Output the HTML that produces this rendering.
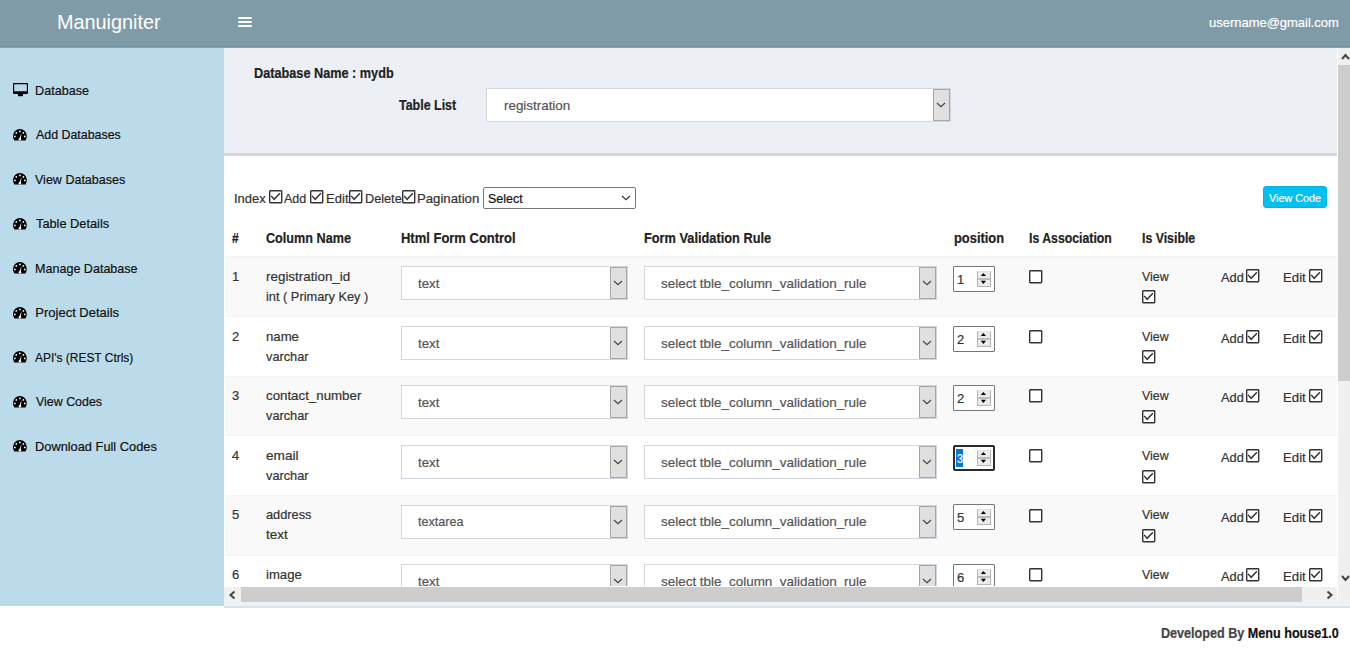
<!DOCTYPE html>
<html><head><meta charset="utf-8"><title>Manuigniter</title><style>
*{margin:0;padding:0;box-sizing:border-box}
html,body{width:1350px;height:650px;overflow:hidden}
body{position:relative;font-family:"Liberation Sans",sans-serif;background:#fff;color:#333}
.a{position:absolute}
.t{position:absolute;white-space:nowrap;line-height:1;transform-origin:0 0;-webkit-text-stroke:0.2px currentColor}
</style></head><body>
<div class="a" style="left:0px;top:0px;width:1350px;height:48px;background:#7f9ba8;"></div>
<div class="a" style="left:0px;top:46px;width:1350px;height:1px;background:#7391a0;"></div>
<div class="a" style="left:0px;top:47px;width:1350px;height:1px;background:#8aa3b0;"></div>
<div class="t" style="left:57.31px;top:12.37px;font-size:20px;color:#fff;transform:scaleX(0.9919);-webkit-text-stroke:0;">Manuigniter</div>
<div class="a" style="left:238px;top:17px;width:13.5px;height:2px;background:#fff;border-radius:1px;"></div>
<div class="a" style="left:238px;top:21px;width:13.5px;height:2px;background:#fff;border-radius:1px;"></div>
<div class="a" style="left:238px;top:25px;width:13.5px;height:2px;background:#fff;border-radius:1px;"></div>
<div class="t" style="left:1208.70px;top:15.57px;font-size:13.5px;color:#fff;transform:scaleX(0.9600);">username@gmail.com</div>
<div class="a" style="left:0px;top:48px;width:224px;height:558px;background:#bcdbea;"></div>
<div class="t" style="left:35.33px;top:83.80px;font-size:13px;color:#111;transform:scaleX(0.9721);">Database</div>
<svg class="a" style="left:13px;top:82.8px" width="15" height="14" viewBox="0 0 15 14"><path fill-rule="evenodd" d="M1,0 H14 Q15,0 15,1 V10 Q15,11 14,11 H1 Q0,11 0,10 V1 Q0,0 1,0 Z M1.2,1.2 V8.2 H13.8 V1.2 Z" fill="#000"/><rect x="5" y="11" width="5" height="2.2" fill="#000"/></svg>
<div class="t" style="left:35.70px;top:128.30px;font-size:13px;color:#111;transform:scaleX(0.9542);">Add Databases</div>
<svg class="a" style="left:13px;top:128.5px" width="14" height="12" viewBox="0 0 14 12"><path d="M1.3,11.5 Q0,9.5 0,7 A6.9,7 0 1 1 13.8,7 Q13.8,9.5 12.5,11.5 Z" fill="#000"/><circle cx="6.9" cy="2.4" r="0.9" fill="#fff"/><circle cx="3.3" cy="3.9" r="0.9" fill="#fff"/><circle cx="10.4" cy="3.9" r="0.9" fill="#fff"/><circle cx="1.9" cy="7.4" r="0.9" fill="#fff"/><circle cx="11.8" cy="7.4" r="0.9" fill="#fff"/><path d="M6.1,10.4 L8.5,4.1 L7.7,10.6 Z" fill="#fff"/><circle cx="6.9" cy="10.2" r="1.2" fill="#fff"/></svg>
<div class="t" style="left:35.30px;top:172.80px;font-size:13px;color:#111;transform:scaleX(0.9628);">View Databases</div>
<svg class="a" style="left:13px;top:173.0px" width="14" height="12" viewBox="0 0 14 12"><path d="M1.3,11.5 Q0,9.5 0,7 A6.9,7 0 1 1 13.8,7 Q13.8,9.5 12.5,11.5 Z" fill="#000"/><circle cx="6.9" cy="2.4" r="0.9" fill="#fff"/><circle cx="3.3" cy="3.9" r="0.9" fill="#fff"/><circle cx="10.4" cy="3.9" r="0.9" fill="#fff"/><circle cx="1.9" cy="7.4" r="0.9" fill="#fff"/><circle cx="11.8" cy="7.4" r="0.9" fill="#fff"/><path d="M6.1,10.4 L8.5,4.1 L7.7,10.6 Z" fill="#fff"/><circle cx="6.9" cy="10.2" r="1.2" fill="#fff"/></svg>
<div class="t" style="left:36.00px;top:217.30px;font-size:13px;color:#111;transform:scaleX(0.9823);">Table Details</div>
<svg class="a" style="left:13px;top:217.5px" width="14" height="12" viewBox="0 0 14 12"><path d="M1.3,11.5 Q0,9.5 0,7 A6.9,7 0 1 1 13.8,7 Q13.8,9.5 12.5,11.5 Z" fill="#000"/><circle cx="6.9" cy="2.4" r="0.9" fill="#fff"/><circle cx="3.3" cy="3.9" r="0.9" fill="#fff"/><circle cx="10.4" cy="3.9" r="0.9" fill="#fff"/><circle cx="1.9" cy="7.4" r="0.9" fill="#fff"/><circle cx="11.8" cy="7.4" r="0.9" fill="#fff"/><path d="M6.1,10.4 L8.5,4.1 L7.7,10.6 Z" fill="#fff"/><circle cx="6.9" cy="10.2" r="1.2" fill="#fff"/></svg>
<div class="t" style="left:35.33px;top:261.80px;font-size:13px;color:#111;transform:scaleX(0.9656);">Manage Database</div>
<svg class="a" style="left:13px;top:262.0px" width="14" height="12" viewBox="0 0 14 12"><path d="M1.3,11.5 Q0,9.5 0,7 A6.9,7 0 1 1 13.8,7 Q13.8,9.5 12.5,11.5 Z" fill="#000"/><circle cx="6.9" cy="2.4" r="0.9" fill="#fff"/><circle cx="3.3" cy="3.9" r="0.9" fill="#fff"/><circle cx="10.4" cy="3.9" r="0.9" fill="#fff"/><circle cx="1.9" cy="7.4" r="0.9" fill="#fff"/><circle cx="11.8" cy="7.4" r="0.9" fill="#fff"/><path d="M6.1,10.4 L8.5,4.1 L7.7,10.6 Z" fill="#fff"/><circle cx="6.9" cy="10.2" r="1.2" fill="#fff"/></svg>
<div class="t" style="left:35.30px;top:306.30px;font-size:13px;color:#111;">Project Details</div>
<svg class="a" style="left:13px;top:306.5px" width="14" height="12" viewBox="0 0 14 12"><path d="M1.3,11.5 Q0,9.5 0,7 A6.9,7 0 1 1 13.8,7 Q13.8,9.5 12.5,11.5 Z" fill="#000"/><circle cx="6.9" cy="2.4" r="0.9" fill="#fff"/><circle cx="3.3" cy="3.9" r="0.9" fill="#fff"/><circle cx="10.4" cy="3.9" r="0.9" fill="#fff"/><circle cx="1.9" cy="7.4" r="0.9" fill="#fff"/><circle cx="11.8" cy="7.4" r="0.9" fill="#fff"/><path d="M6.1,10.4 L8.5,4.1 L7.7,10.6 Z" fill="#fff"/><circle cx="6.9" cy="10.2" r="1.2" fill="#fff"/></svg>
<div class="t" style="left:35.40px;top:350.80px;font-size:13px;color:#111;transform:scaleX(0.9188);">API's (REST Ctrls)</div>
<svg class="a" style="left:13px;top:351.0px" width="14" height="12" viewBox="0 0 14 12"><path d="M1.3,11.5 Q0,9.5 0,7 A6.9,7 0 1 1 13.8,7 Q13.8,9.5 12.5,11.5 Z" fill="#000"/><circle cx="6.9" cy="2.4" r="0.9" fill="#fff"/><circle cx="3.3" cy="3.9" r="0.9" fill="#fff"/><circle cx="10.4" cy="3.9" r="0.9" fill="#fff"/><circle cx="1.9" cy="7.4" r="0.9" fill="#fff"/><circle cx="11.8" cy="7.4" r="0.9" fill="#fff"/><path d="M6.1,10.4 L8.5,4.1 L7.7,10.6 Z" fill="#fff"/><circle cx="6.9" cy="10.2" r="1.2" fill="#fff"/></svg>
<div class="t" style="left:35.70px;top:395.30px;font-size:13px;color:#111;transform:scaleX(0.9550);">View Codes</div>
<svg class="a" style="left:13px;top:395.5px" width="14" height="12" viewBox="0 0 14 12"><path d="M1.3,11.5 Q0,9.5 0,7 A6.9,7 0 1 1 13.8,7 Q13.8,9.5 12.5,11.5 Z" fill="#000"/><circle cx="6.9" cy="2.4" r="0.9" fill="#fff"/><circle cx="3.3" cy="3.9" r="0.9" fill="#fff"/><circle cx="10.4" cy="3.9" r="0.9" fill="#fff"/><circle cx="1.9" cy="7.4" r="0.9" fill="#fff"/><circle cx="11.8" cy="7.4" r="0.9" fill="#fff"/><path d="M6.1,10.4 L8.5,4.1 L7.7,10.6 Z" fill="#fff"/><circle cx="6.9" cy="10.2" r="1.2" fill="#fff"/></svg>
<div class="t" style="left:35.31px;top:439.80px;font-size:13px;color:#111;transform:scaleX(0.9857);">Download Full Codes</div>
<svg class="a" style="left:13px;top:440.0px" width="14" height="12" viewBox="0 0 14 12"><path d="M1.3,11.5 Q0,9.5 0,7 A6.9,7 0 1 1 13.8,7 Q13.8,9.5 12.5,11.5 Z" fill="#000"/><circle cx="6.9" cy="2.4" r="0.9" fill="#fff"/><circle cx="3.3" cy="3.9" r="0.9" fill="#fff"/><circle cx="10.4" cy="3.9" r="0.9" fill="#fff"/><circle cx="1.9" cy="7.4" r="0.9" fill="#fff"/><circle cx="11.8" cy="7.4" r="0.9" fill="#fff"/><path d="M6.1,10.4 L8.5,4.1 L7.7,10.6 Z" fill="#fff"/><circle cx="6.9" cy="10.2" r="1.2" fill="#fff"/></svg>
<div class="a" style="left:224px;top:48px;width:1114px;height:105px;background:#ecf0f5;"></div>
<div class="t" style="left:254.00px;top:65.98px;font-size:14.2px;color:#222;font-weight:bold;transform:scaleX(0.8948);">Database Name : mydb</div>
<div class="t" style="left:398.60px;top:97.98px;font-size:14.2px;color:#222;font-weight:bold;transform:scaleX(0.8771);">Table List</div>
<div class="a" style="left:486px;top:88px;width:465px;height:34px;background:#fff;border:1px solid #d2d6de;"></div>
<div class="a" style="left:933px;top:89px;width:17px;height:32px;background:#e0e0e0;border:1px solid #a6a6a6;"></div>
<svg class="a" style="left:936.0px;top:102.0px" width="10" height="6" viewBox="0 0 10 6"><polyline points="1,1 5,4.6 9,1" fill="none" stroke="#444" stroke-width="1.2"/></svg>
<div class="t" style="left:503.50px;top:99.00px;font-size:13px;color:#555;transform:scaleX(1.0300);">registration</div>
<div class="a" style="left:224px;top:153px;width:1114px;height:3px;background:#d2d6de;"></div>
<div class="a" style="left:224px;top:156px;width:1114px;height:431px;background:#fff;"></div>
<div class="t" style="left:233.51px;top:191.80px;font-size:13px;color:#333;transform:scaleX(0.9936);">Index</div>
<svg class="a" style="left:268.7px;top:190px" width="14" height="14" viewBox="0 0 14 14"><rect x="0.7" y="0.7" width="12" height="12" rx="0.6" fill="#fff" stroke="#333" stroke-width="1.4"/><polyline points="2.2,5.9 5.1,9.3 10.9,3.3" fill="none" stroke="#333" stroke-width="1.45"/></svg>
<div class="t" style="left:284.40px;top:191.80px;font-size:13px;color:#333;transform:scaleX(0.9650);">Add</div>
<svg class="a" style="left:310.4px;top:190px" width="14" height="14" viewBox="0 0 14 14"><rect x="0.7" y="0.7" width="12" height="12" rx="0.6" fill="#fff" stroke="#333" stroke-width="1.4"/><polyline points="2.2,5.9 5.1,9.3 10.9,3.3" fill="none" stroke="#333" stroke-width="1.45"/></svg>
<div class="t" style="left:325.69px;top:191.80px;font-size:13px;color:#333;transform:scaleX(1.0097);">Edit</div>
<svg class="a" style="left:349.2px;top:190px" width="14" height="14" viewBox="0 0 14 14"><rect x="0.7" y="0.7" width="12" height="12" rx="0.6" fill="#fff" stroke="#333" stroke-width="1.4"/><polyline points="2.2,5.9 5.1,9.3 10.9,3.3" fill="none" stroke="#333" stroke-width="1.45"/></svg>
<div class="t" style="left:364.52px;top:191.80px;font-size:13px;color:#333;transform:scaleX(0.9767);">Delete</div>
<svg class="a" style="left:401.9px;top:190px" width="14" height="14" viewBox="0 0 14 14"><rect x="0.7" y="0.7" width="12" height="12" rx="0.6" fill="#fff" stroke="#333" stroke-width="1.4"/><polyline points="2.2,5.9 5.1,9.3 10.9,3.3" fill="none" stroke="#333" stroke-width="1.45"/></svg>
<div class="t" style="left:416.99px;top:191.80px;font-size:13px;color:#333;transform:scaleX(1.0131);">Pagination</div>
<div class="a" style="left:483px;top:187px;width:153px;height:22px;background:#fff;border:1px solid #767676;border-radius:2px;"></div>
<div class="t" style="left:488.40px;top:192.00px;font-size:13px;color:#111;transform:scaleX(0.9584);">Select</div>
<svg class="a" style="left:621px;top:195px" width="10" height="6" viewBox="0 0 10 6"><polyline points="1,1 5,4.6 9,1" fill="none" stroke="#333" stroke-width="1.2"/></svg>
<div class="a" style="left:1263px;top:186px;width:64px;height:22px;background:#00c0ef;border:1px solid #00b5e3;border-radius:3px;"></div>
<div class="t" style="left:1269.30px;top:192.97px;font-size:11.5px;color:#fff;transform:scaleX(0.9398);">View Code</div>
<div class="t" style="left:232.00px;top:230.98px;font-size:14.2px;color:#222;font-weight:bold;transform:scaleX(0.8500);">#</div>
<div class="t" style="left:266.00px;top:230.98px;font-size:14.2px;color:#222;font-weight:bold;transform:scaleX(0.8901);">Column Name</div>
<div class="t" style="left:401.20px;top:230.98px;font-size:14.2px;color:#222;font-weight:bold;transform:scaleX(0.9150);">Html Form Control</div>
<div class="t" style="left:644.40px;top:230.98px;font-size:14.2px;color:#222;font-weight:bold;transform:scaleX(0.9008);">Form Validation Rule</div>
<div class="t" style="left:953.80px;top:230.98px;font-size:14.2px;color:#222;font-weight:bold;transform:scaleX(0.9083);">position</div>
<div class="t" style="left:1028.90px;top:230.98px;font-size:14.2px;color:#222;font-weight:bold;transform:scaleX(0.8658);">Is Association</div>
<div class="t" style="left:1141.80px;top:230.98px;font-size:14.2px;color:#222;font-weight:bold;transform:scaleX(0.8686);">Is Visible</div>
<div class="a" style="left:225px;top:255.5px;width:1112px;height:2px;background:#f4f4f4;"></div>
<div class="a" style="left:225px;top:257.5px;width:1112px;height:58.25px;background:#f9f9f9;"></div>
<div class="t" style="left:232.00px;top:269.75px;font-size:13px;color:#333;">1</div>
<div class="t" style="left:266.00px;top:269.75px;font-size:13px;color:#333;transform:scaleX(1.0316);">registration_id</div>
<div class="t" style="left:266.00px;top:289.75px;font-size:13px;color:#333;transform:scaleX(0.9838);">int ( Primary Key )</div>
<div class="a" style="left:401px;top:266px;width:227px;height:34px;background:#fff;border:1px solid #d2d6de;"></div>
<div class="a" style="left:610px;top:267px;width:17px;height:32px;background:#e0e0e0;border:1px solid #a6a6a6;"></div>
<svg class="a" style="left:613.0px;top:280.0px" width="10" height="6" viewBox="0 0 10 6"><polyline points="1,1 5,4.6 9,1" fill="none" stroke="#444" stroke-width="1.2"/></svg>
<div class="t" style="left:418.00px;top:276.75px;font-size:13px;color:#555;transform:scaleX(1.0168);">text</div>
<div class="a" style="left:644px;top:266px;width:293px;height:34px;background:#fff;border:1px solid #d2d6de;"></div>
<div class="a" style="left:919px;top:267px;width:17px;height:32px;background:#e0e0e0;border:1px solid #a6a6a6;"></div>
<svg class="a" style="left:922.0px;top:280.0px" width="10" height="6" viewBox="0 0 10 6"><polyline points="1,1 5,4.6 9,1" fill="none" stroke="#444" stroke-width="1.2"/></svg>
<div class="t" style="left:661.10px;top:276.75px;font-size:13px;color:#555;transform:scaleX(1.0342);">select tble_column_validation_rule</div>
<div class="a" style="left:953px;top:266px;width:42px;height:26px;background:#fff;border:1px solid #767676;border-radius:1px;"></div>
<div class="t" style="left:957.00px;top:273.00px;font-size:13px;color:#333;">1</div>
<div class="a" style="left:977px;top:271px;width:14px;height:16px;background:#ebebeb;border:1px solid #b5b5b5;border-top-color:#e3e3e3;"></div>
<div class="a" style="left:978px;top:278px;width:12px;height:1.5px;background:#bdbdbd;"></div>
<svg class="a" style="left:977px;top:271px" width="14" height="16" viewBox="0 0 14 16"><polygon points="3.8,5.1 6.4,1.9 9,5.1" fill="#000"/><polygon points="3.8,9.8 6.4,13 9,9.8" fill="#000"/></svg>
<svg class="a" style="left:1028.5px;top:270.0px" width="14" height="14" viewBox="0 0 14 14"><rect x="0.7" y="0.7" width="12" height="12" rx="0.6" fill="#fff" stroke="#333" stroke-width="1.4"/></svg>
<div class="t" style="left:1141.50px;top:269.75px;font-size:13px;color:#333;transform:scaleX(0.9526);">View</div>
<svg class="a" style="left:1142px;top:290.2px" width="14" height="14" viewBox="0 0 14 14"><rect x="0.7" y="0.7" width="12" height="12" rx="0.6" fill="#fff" stroke="#333" stroke-width="1.4"/><polyline points="2.2,5.9 5.1,9.3 10.9,3.3" fill="none" stroke="#333" stroke-width="1.45"/></svg>
<div class="t" style="left:1220.60px;top:270.80px;font-size:13px;color:#333;transform:scaleX(0.9869);">Add</div>
<svg class="a" style="left:1246.3px;top:268.8px" width="14" height="14" viewBox="0 0 14 14"><rect x="0.7" y="0.7" width="12" height="12" rx="0.6" fill="#fff" stroke="#333" stroke-width="1.4"/><polyline points="2.2,5.9 5.1,9.3 10.9,3.3" fill="none" stroke="#333" stroke-width="1.45"/></svg>
<div class="t" style="left:1282.69px;top:270.80px;font-size:13px;color:#333;transform:scaleX(1.0143);">Edit</div>
<svg class="a" style="left:1309.2px;top:268.8px" width="14" height="14" viewBox="0 0 14 14"><rect x="0.7" y="0.7" width="12" height="12" rx="0.6" fill="#fff" stroke="#333" stroke-width="1.4"/><polyline points="2.2,5.9 5.1,9.3 10.9,3.3" fill="none" stroke="#333" stroke-width="1.45"/></svg>
<div class="a" style="left:225px;top:315.75px;width:1112px;height:59.75px;background:#fff;"></div>
<div class="a" style="left:225px;top:315.75px;width:1112px;height:1px;background:#f4f4f4;"></div>
<div class="t" style="left:232.00px;top:329.55px;font-size:13px;color:#333;">2</div>
<div class="t" style="left:266.00px;top:329.55px;font-size:13px;color:#333;transform:scaleX(1.0127);">name</div>
<div class="t" style="left:266.00px;top:349.55px;font-size:13px;color:#333;transform:scaleX(0.9814);">varchar</div>
<div class="a" style="left:401px;top:326px;width:227px;height:34px;background:#fff;border:1px solid #d2d6de;"></div>
<div class="a" style="left:610px;top:327px;width:17px;height:32px;background:#e0e0e0;border:1px solid #a6a6a6;"></div>
<svg class="a" style="left:613.0px;top:340.0px" width="10" height="6" viewBox="0 0 10 6"><polyline points="1,1 5,4.6 9,1" fill="none" stroke="#444" stroke-width="1.2"/></svg>
<div class="t" style="left:418.00px;top:336.55px;font-size:13px;color:#555;transform:scaleX(1.0168);">text</div>
<div class="a" style="left:644px;top:326px;width:293px;height:34px;background:#fff;border:1px solid #d2d6de;"></div>
<div class="a" style="left:919px;top:327px;width:17px;height:32px;background:#e0e0e0;border:1px solid #a6a6a6;"></div>
<svg class="a" style="left:922.0px;top:340.0px" width="10" height="6" viewBox="0 0 10 6"><polyline points="1,1 5,4.6 9,1" fill="none" stroke="#444" stroke-width="1.2"/></svg>
<div class="t" style="left:661.10px;top:336.55px;font-size:13px;color:#555;transform:scaleX(1.0342);">select tble_column_validation_rule</div>
<div class="a" style="left:953px;top:326px;width:42px;height:26px;background:#fff;border:1px solid #767676;border-radius:1px;"></div>
<div class="t" style="left:957.00px;top:333.00px;font-size:13px;color:#333;">2</div>
<div class="a" style="left:977px;top:331px;width:14px;height:16px;background:#ebebeb;border:1px solid #b5b5b5;border-top-color:#e3e3e3;"></div>
<div class="a" style="left:978px;top:338px;width:12px;height:1.5px;background:#bdbdbd;"></div>
<svg class="a" style="left:977px;top:331px" width="14" height="16" viewBox="0 0 14 16"><polygon points="3.8,5.1 6.4,1.9 9,5.1" fill="#000"/><polygon points="3.8,9.8 6.4,13 9,9.8" fill="#000"/></svg>
<svg class="a" style="left:1028.5px;top:329.8px" width="14" height="14" viewBox="0 0 14 14"><rect x="0.7" y="0.7" width="12" height="12" rx="0.6" fill="#fff" stroke="#333" stroke-width="1.4"/></svg>
<div class="t" style="left:1141.50px;top:329.55px;font-size:13px;color:#333;transform:scaleX(0.9526);">View</div>
<svg class="a" style="left:1142px;top:350.0px" width="14" height="14" viewBox="0 0 14 14"><rect x="0.7" y="0.7" width="12" height="12" rx="0.6" fill="#fff" stroke="#333" stroke-width="1.4"/><polyline points="2.2,5.9 5.1,9.3 10.9,3.3" fill="none" stroke="#333" stroke-width="1.45"/></svg>
<div class="t" style="left:1220.60px;top:331.60px;font-size:13px;color:#333;transform:scaleX(0.9869);">Add</div>
<svg class="a" style="left:1246.3px;top:329.6px" width="14" height="14" viewBox="0 0 14 14"><rect x="0.7" y="0.7" width="12" height="12" rx="0.6" fill="#fff" stroke="#333" stroke-width="1.4"/><polyline points="2.2,5.9 5.1,9.3 10.9,3.3" fill="none" stroke="#333" stroke-width="1.45"/></svg>
<div class="t" style="left:1282.69px;top:331.60px;font-size:13px;color:#333;transform:scaleX(1.0143);">Edit</div>
<svg class="a" style="left:1309.2px;top:329.6px" width="14" height="14" viewBox="0 0 14 14"><rect x="0.7" y="0.7" width="12" height="12" rx="0.6" fill="#fff" stroke="#333" stroke-width="1.4"/><polyline points="2.2,5.9 5.1,9.3 10.9,3.3" fill="none" stroke="#333" stroke-width="1.45"/></svg>
<div class="a" style="left:225px;top:375.50px;width:1112px;height:59.75px;background:#f9f9f9;"></div>
<div class="a" style="left:225px;top:375.50px;width:1112px;height:1px;background:#f4f4f4;"></div>
<div class="t" style="left:232.00px;top:389.15px;font-size:13px;color:#333;">3</div>
<div class="t" style="left:266.00px;top:389.15px;font-size:13px;color:#333;transform:scaleX(1.0224);">contact_number</div>
<div class="t" style="left:266.00px;top:409.15px;font-size:13px;color:#333;transform:scaleX(0.9814);">varchar</div>
<div class="a" style="left:401px;top:385px;width:227px;height:34px;background:#fff;border:1px solid #d2d6de;"></div>
<div class="a" style="left:610px;top:386px;width:17px;height:32px;background:#e0e0e0;border:1px solid #a6a6a6;"></div>
<svg class="a" style="left:613.0px;top:399.0px" width="10" height="6" viewBox="0 0 10 6"><polyline points="1,1 5,4.6 9,1" fill="none" stroke="#444" stroke-width="1.2"/></svg>
<div class="t" style="left:418.00px;top:396.15px;font-size:13px;color:#555;transform:scaleX(1.0168);">text</div>
<div class="a" style="left:644px;top:385px;width:293px;height:34px;background:#fff;border:1px solid #d2d6de;"></div>
<div class="a" style="left:919px;top:386px;width:17px;height:32px;background:#e0e0e0;border:1px solid #a6a6a6;"></div>
<svg class="a" style="left:922.0px;top:399.0px" width="10" height="6" viewBox="0 0 10 6"><polyline points="1,1 5,4.6 9,1" fill="none" stroke="#444" stroke-width="1.2"/></svg>
<div class="t" style="left:661.10px;top:396.15px;font-size:13px;color:#555;transform:scaleX(1.0342);">select tble_column_validation_rule</div>
<div class="a" style="left:953px;top:385px;width:42px;height:26px;background:#fff;border:1px solid #767676;border-radius:1px;"></div>
<div class="t" style="left:957.00px;top:392.00px;font-size:13px;color:#333;">2</div>
<div class="a" style="left:977px;top:390px;width:14px;height:16px;background:#ebebeb;border:1px solid #b5b5b5;border-top-color:#e3e3e3;"></div>
<div class="a" style="left:978px;top:397px;width:12px;height:1.5px;background:#bdbdbd;"></div>
<svg class="a" style="left:977px;top:390px" width="14" height="16" viewBox="0 0 14 16"><polygon points="3.8,5.1 6.4,1.9 9,5.1" fill="#000"/><polygon points="3.8,9.8 6.4,13 9,9.8" fill="#000"/></svg>
<svg class="a" style="left:1028.5px;top:389.4px" width="14" height="14" viewBox="0 0 14 14"><rect x="0.7" y="0.7" width="12" height="12" rx="0.6" fill="#fff" stroke="#333" stroke-width="1.4"/></svg>
<div class="t" style="left:1141.50px;top:389.15px;font-size:13px;color:#333;transform:scaleX(0.9526);">View</div>
<svg class="a" style="left:1142px;top:409.59999999999997px" width="14" height="14" viewBox="0 0 14 14"><rect x="0.7" y="0.7" width="12" height="12" rx="0.6" fill="#fff" stroke="#333" stroke-width="1.4"/><polyline points="2.2,5.9 5.1,9.3 10.9,3.3" fill="none" stroke="#333" stroke-width="1.45"/></svg>
<div class="t" style="left:1220.60px;top:391.10px;font-size:13px;color:#333;transform:scaleX(0.9869);">Add</div>
<svg class="a" style="left:1246.3px;top:389.1px" width="14" height="14" viewBox="0 0 14 14"><rect x="0.7" y="0.7" width="12" height="12" rx="0.6" fill="#fff" stroke="#333" stroke-width="1.4"/><polyline points="2.2,5.9 5.1,9.3 10.9,3.3" fill="none" stroke="#333" stroke-width="1.45"/></svg>
<div class="t" style="left:1282.69px;top:391.10px;font-size:13px;color:#333;transform:scaleX(1.0143);">Edit</div>
<svg class="a" style="left:1309.2px;top:389.1px" width="14" height="14" viewBox="0 0 14 14"><rect x="0.7" y="0.7" width="12" height="12" rx="0.6" fill="#fff" stroke="#333" stroke-width="1.4"/><polyline points="2.2,5.9 5.1,9.3 10.9,3.3" fill="none" stroke="#333" stroke-width="1.45"/></svg>
<div class="a" style="left:225px;top:435.25px;width:1112px;height:59.75px;background:#fff;"></div>
<div class="a" style="left:225px;top:435.25px;width:1112px;height:1px;background:#f4f4f4;"></div>
<div class="t" style="left:232.00px;top:449.15px;font-size:13px;color:#333;">4</div>
<div class="t" style="left:266.00px;top:449.15px;font-size:13px;color:#333;transform:scaleX(1.0488);">email</div>
<div class="t" style="left:266.00px;top:469.15px;font-size:13px;color:#333;transform:scaleX(0.9814);">varchar</div>
<div class="a" style="left:401px;top:445px;width:227px;height:34px;background:#fff;border:1px solid #d2d6de;"></div>
<div class="a" style="left:610px;top:446px;width:17px;height:32px;background:#e0e0e0;border:1px solid #a6a6a6;"></div>
<svg class="a" style="left:613.0px;top:459.0px" width="10" height="6" viewBox="0 0 10 6"><polyline points="1,1 5,4.6 9,1" fill="none" stroke="#444" stroke-width="1.2"/></svg>
<div class="t" style="left:418.00px;top:456.15px;font-size:13px;color:#555;transform:scaleX(1.0168);">text</div>
<div class="a" style="left:644px;top:445px;width:293px;height:34px;background:#fff;border:1px solid #d2d6de;"></div>
<div class="a" style="left:919px;top:446px;width:17px;height:32px;background:#e0e0e0;border:1px solid #a6a6a6;"></div>
<svg class="a" style="left:922.0px;top:459.0px" width="10" height="6" viewBox="0 0 10 6"><polyline points="1,1 5,4.6 9,1" fill="none" stroke="#444" stroke-width="1.2"/></svg>
<div class="t" style="left:661.10px;top:456.15px;font-size:13px;color:#555;transform:scaleX(1.0342);">select tble_column_validation_rule</div>
<div class="a" style="left:953px;top:445px;width:42px;height:26px;background:#fff;border:2px solid #2b2b2b;border-radius:2px;"></div>
<div class="a" style="left:956px;top:449px;width:7px;height:18px;background:#0078d7;"></div>
<div class="t" style="left:956.60px;top:452.00px;font-size:13px;color:#fff;transform:scaleX(0.8286);">3</div>
<div class="a" style="left:977px;top:450px;width:14px;height:16px;background:#ebebeb;border:1px solid #b5b5b5;border-top-color:#e3e3e3;"></div>
<div class="a" style="left:978px;top:457px;width:12px;height:1.5px;background:#bdbdbd;"></div>
<svg class="a" style="left:977px;top:450px" width="14" height="16" viewBox="0 0 14 16"><polygon points="3.8,5.1 6.4,1.9 9,5.1" fill="#000"/><polygon points="3.8,9.8 6.4,13 9,9.8" fill="#000"/></svg>
<svg class="a" style="left:1028.5px;top:449.4px" width="14" height="14" viewBox="0 0 14 14"><rect x="0.7" y="0.7" width="12" height="12" rx="0.6" fill="#fff" stroke="#333" stroke-width="1.4"/></svg>
<div class="t" style="left:1141.50px;top:449.15px;font-size:13px;color:#333;transform:scaleX(0.9526);">View</div>
<svg class="a" style="left:1142px;top:469.59999999999997px" width="14" height="14" viewBox="0 0 14 14"><rect x="0.7" y="0.7" width="12" height="12" rx="0.6" fill="#fff" stroke="#333" stroke-width="1.4"/><polyline points="2.2,5.9 5.1,9.3 10.9,3.3" fill="none" stroke="#333" stroke-width="1.45"/></svg>
<div class="t" style="left:1220.60px;top:450.60px;font-size:13px;color:#333;transform:scaleX(0.9869);">Add</div>
<svg class="a" style="left:1246.3px;top:448.6px" width="14" height="14" viewBox="0 0 14 14"><rect x="0.7" y="0.7" width="12" height="12" rx="0.6" fill="#fff" stroke="#333" stroke-width="1.4"/><polyline points="2.2,5.9 5.1,9.3 10.9,3.3" fill="none" stroke="#333" stroke-width="1.45"/></svg>
<div class="t" style="left:1282.69px;top:450.60px;font-size:13px;color:#333;transform:scaleX(1.0143);">Edit</div>
<svg class="a" style="left:1309.2px;top:448.6px" width="14" height="14" viewBox="0 0 14 14"><rect x="0.7" y="0.7" width="12" height="12" rx="0.6" fill="#fff" stroke="#333" stroke-width="1.4"/><polyline points="2.2,5.9 5.1,9.3 10.9,3.3" fill="none" stroke="#333" stroke-width="1.45"/></svg>
<div class="a" style="left:225px;top:495.00px;width:1112px;height:59.75px;background:#f9f9f9;"></div>
<div class="a" style="left:225px;top:495.00px;width:1112px;height:1px;background:#f4f4f4;"></div>
<div class="t" style="left:232.00px;top:508.35px;font-size:13px;color:#333;">5</div>
<div class="t" style="left:266.00px;top:508.35px;font-size:13px;color:#333;transform:scaleX(0.9818);">address</div>
<div class="t" style="left:266.00px;top:528.35px;font-size:13px;color:#333;transform:scaleX(1.0308);">text</div>
<div class="a" style="left:401px;top:505px;width:227px;height:34px;background:#fff;border:1px solid #d2d6de;"></div>
<div class="a" style="left:610px;top:506px;width:17px;height:32px;background:#e0e0e0;border:1px solid #a6a6a6;"></div>
<svg class="a" style="left:613.0px;top:519.0px" width="10" height="6" viewBox="0 0 10 6"><polyline points="1,1 5,4.6 9,1" fill="none" stroke="#444" stroke-width="1.2"/></svg>
<div class="t" style="left:418.00px;top:515.35px;font-size:13px;color:#555;transform:scaleX(0.9698);">textarea</div>
<div class="a" style="left:644px;top:505px;width:293px;height:34px;background:#fff;border:1px solid #d2d6de;"></div>
<div class="a" style="left:919px;top:506px;width:17px;height:32px;background:#e0e0e0;border:1px solid #a6a6a6;"></div>
<svg class="a" style="left:922.0px;top:519.0px" width="10" height="6" viewBox="0 0 10 6"><polyline points="1,1 5,4.6 9,1" fill="none" stroke="#444" stroke-width="1.2"/></svg>
<div class="t" style="left:661.10px;top:515.35px;font-size:13px;color:#555;transform:scaleX(1.0342);">select tble_column_validation_rule</div>
<div class="a" style="left:953px;top:504px;width:42px;height:26px;background:#fff;border:1px solid #767676;border-radius:1px;"></div>
<div class="t" style="left:957.00px;top:511.00px;font-size:13px;color:#333;">5</div>
<div class="a" style="left:977px;top:509px;width:14px;height:16px;background:#ebebeb;border:1px solid #b5b5b5;border-top-color:#e3e3e3;"></div>
<div class="a" style="left:978px;top:516px;width:12px;height:1.5px;background:#bdbdbd;"></div>
<svg class="a" style="left:977px;top:509px" width="14" height="16" viewBox="0 0 14 16"><polygon points="3.8,5.1 6.4,1.9 9,5.1" fill="#000"/><polygon points="3.8,9.8 6.4,13 9,9.8" fill="#000"/></svg>
<svg class="a" style="left:1028.5px;top:508.6px" width="14" height="14" viewBox="0 0 14 14"><rect x="0.7" y="0.7" width="12" height="12" rx="0.6" fill="#fff" stroke="#333" stroke-width="1.4"/></svg>
<div class="t" style="left:1141.50px;top:508.35px;font-size:13px;color:#333;transform:scaleX(0.9526);">View</div>
<svg class="a" style="left:1142px;top:528.8000000000001px" width="14" height="14" viewBox="0 0 14 14"><rect x="0.7" y="0.7" width="12" height="12" rx="0.6" fill="#fff" stroke="#333" stroke-width="1.4"/><polyline points="2.2,5.9 5.1,9.3 10.9,3.3" fill="none" stroke="#333" stroke-width="1.45"/></svg>
<div class="t" style="left:1220.60px;top:510.60px;font-size:13px;color:#333;transform:scaleX(0.9869);">Add</div>
<svg class="a" style="left:1246.3px;top:508.6px" width="14" height="14" viewBox="0 0 14 14"><rect x="0.7" y="0.7" width="12" height="12" rx="0.6" fill="#fff" stroke="#333" stroke-width="1.4"/><polyline points="2.2,5.9 5.1,9.3 10.9,3.3" fill="none" stroke="#333" stroke-width="1.45"/></svg>
<div class="t" style="left:1282.69px;top:510.60px;font-size:13px;color:#333;transform:scaleX(1.0143);">Edit</div>
<svg class="a" style="left:1309.2px;top:508.6px" width="14" height="14" viewBox="0 0 14 14"><rect x="0.7" y="0.7" width="12" height="12" rx="0.6" fill="#fff" stroke="#333" stroke-width="1.4"/><polyline points="2.2,5.9 5.1,9.3 10.9,3.3" fill="none" stroke="#333" stroke-width="1.45"/></svg>
<div class="a" style="left:225px;top:554.75px;width:1112px;height:59.75px;background:#fff;"></div>
<div class="a" style="left:225px;top:554.75px;width:1112px;height:1px;background:#f4f4f4;"></div>
<div class="t" style="left:232.00px;top:567.95px;font-size:13px;color:#333;">6</div>
<div class="t" style="left:266.00px;top:567.95px;font-size:13px;color:#333;transform:scaleX(1.0092);">image</div>
<div class="a" style="left:401px;top:564px;width:227px;height:34px;background:#fff;border:1px solid #d2d6de;"></div>
<div class="a" style="left:610px;top:565px;width:17px;height:32px;background:#e0e0e0;border:1px solid #a6a6a6;"></div>
<svg class="a" style="left:613.0px;top:578.0px" width="10" height="6" viewBox="0 0 10 6"><polyline points="1,1 5,4.6 9,1" fill="none" stroke="#444" stroke-width="1.2"/></svg>
<div class="t" style="left:418.00px;top:574.95px;font-size:13px;color:#555;transform:scaleX(1.0168);">text</div>
<div class="a" style="left:644px;top:564px;width:293px;height:34px;background:#fff;border:1px solid #d2d6de;"></div>
<div class="a" style="left:919px;top:565px;width:17px;height:32px;background:#e0e0e0;border:1px solid #a6a6a6;"></div>
<svg class="a" style="left:922.0px;top:578.0px" width="10" height="6" viewBox="0 0 10 6"><polyline points="1,1 5,4.6 9,1" fill="none" stroke="#444" stroke-width="1.2"/></svg>
<div class="t" style="left:661.10px;top:574.95px;font-size:13px;color:#555;transform:scaleX(1.0342);">select tble_column_validation_rule</div>
<div class="a" style="left:953px;top:564px;width:42px;height:26px;background:#fff;border:1px solid #767676;border-radius:1px;"></div>
<div class="t" style="left:957.00px;top:571.00px;font-size:13px;color:#333;">6</div>
<div class="a" style="left:977px;top:569px;width:14px;height:16px;background:#ebebeb;border:1px solid #b5b5b5;border-top-color:#e3e3e3;"></div>
<div class="a" style="left:978px;top:576px;width:12px;height:1.5px;background:#bdbdbd;"></div>
<svg class="a" style="left:977px;top:569px" width="14" height="16" viewBox="0 0 14 16"><polygon points="3.8,5.1 6.4,1.9 9,5.1" fill="#000"/><polygon points="3.8,9.8 6.4,13 9,9.8" fill="#000"/></svg>
<svg class="a" style="left:1028.5px;top:568.2px" width="14" height="14" viewBox="0 0 14 14"><rect x="0.7" y="0.7" width="12" height="12" rx="0.6" fill="#fff" stroke="#333" stroke-width="1.4"/></svg>
<div class="t" style="left:1141.50px;top:567.95px;font-size:13px;color:#333;transform:scaleX(0.9526);">View</div>
<svg class="a" style="left:1142px;top:588.4000000000001px" width="14" height="14" viewBox="0 0 14 14"><rect x="0.7" y="0.7" width="12" height="12" rx="0.6" fill="#fff" stroke="#333" stroke-width="1.4"/><polyline points="2.2,5.9 5.1,9.3 10.9,3.3" fill="none" stroke="#333" stroke-width="1.45"/></svg>
<div class="t" style="left:1220.60px;top:569.60px;font-size:13px;color:#333;transform:scaleX(0.9869);">Add</div>
<svg class="a" style="left:1246.3px;top:567.6px" width="14" height="14" viewBox="0 0 14 14"><rect x="0.7" y="0.7" width="12" height="12" rx="0.6" fill="#fff" stroke="#333" stroke-width="1.4"/><polyline points="2.2,5.9 5.1,9.3 10.9,3.3" fill="none" stroke="#333" stroke-width="1.45"/></svg>
<div class="t" style="left:1282.69px;top:569.60px;font-size:13px;color:#333;transform:scaleX(1.0143);">Edit</div>
<svg class="a" style="left:1309.2px;top:567.6px" width="14" height="14" viewBox="0 0 14 14"><rect x="0.7" y="0.7" width="12" height="12" rx="0.6" fill="#fff" stroke="#333" stroke-width="1.4"/><polyline points="2.2,5.9 5.1,9.3 10.9,3.3" fill="none" stroke="#333" stroke-width="1.45"/></svg>
<div class="a" style="left:224px;top:585.5px;width:1113px;height:1.5px;background:#fff;"></div>
<div class="a" style="left:224px;top:587px;width:1113px;height:16px;background:#f0f0f0;"></div>
<div class="a" style="left:241px;top:587px;width:1061px;height:15.3px;background:#cdcdcd;"></div>
<svg class="a" style="left:228px;top:590px" width="9" height="10" viewBox="0 0 9 10"><polyline points="6.5,1.5 2.5,5 6.5,8.5" fill="none" stroke="#444" stroke-width="2"/></svg>
<svg class="a" style="left:1325px;top:590px" width="9" height="10" viewBox="0 0 9 10"><polyline points="2.5,1.5 6.5,5 2.5,8.5" fill="none" stroke="#444" stroke-width="2"/></svg>
<div class="a" style="left:1337px;top:48px;width:1px;height:556px;background:#fff;"></div>
<div class="a" style="left:1338px;top:48px;width:12px;height:556px;background:#f0f0f0;"></div>
<div class="a" style="left:1338px;top:65px;width:12px;height:316px;background:#cdcdcd;"></div>
<svg class="a" style="left:1341px;top:52px" width="9" height="9" viewBox="0 0 9 9"><polyline points="1,7 4.5,3 8,7" fill="none" stroke="#444" stroke-width="2"/></svg>
<svg class="a" style="left:1341px;top:574px" width="9" height="9" viewBox="0 0 9 9"><polyline points="1,2 4.5,6 8,2" fill="none" stroke="#444" stroke-width="2"/></svg>
<div class="a" style="left:224px;top:602px;width:1126px;height:4px;background:#eef1f5;"></div>
<div class="a" style="left:224px;top:606px;width:1126px;height:1.6px;background:#dde2ea;"></div>
<div class="t" style="left:1161.00px;top:625.98px;font-size:14.2px;color:#444;font-weight:bold;transform:scaleX(0.8879);">Developed By <span style="color:#111">Menu house1.0</span></div>
</body></html>
